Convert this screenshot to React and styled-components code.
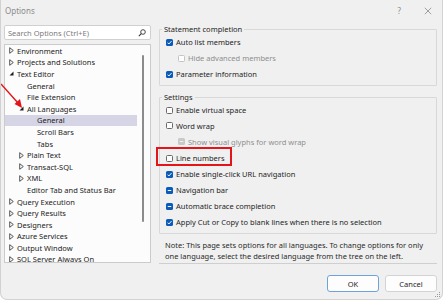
import React from 'react';
import styled, { createGlobalStyle, css } from 'styled-components';

const GlobalStyle = createGlobalStyle`
  html, body {
    margin: 0;
    padding: 0;
    background: #ffffff;
  }
  body {
    font-family: "Noto Sans", "Open Sans", sans-serif;
    font-size: 7.5px;
    color: #1e1e1e;
  }
`;

const treeItems = [
  { label: 'Environment', level: 0, toggle: 'closed' },
  { label: 'Projects and Solutions', level: 0, toggle: 'closed' },
  { label: 'Text Editor', level: 0, toggle: 'open' },
  { label: 'General', level: 1 },
  { label: 'File Extension', level: 1 },
  { label: 'All Languages', level: 1, toggle: 'open' },
  { label: 'General', level: 2, selected: true },
  { label: 'Scroll Bars', level: 2 },
  { label: 'Tabs', level: 2 },
  { label: 'Plain Text', level: 1, toggle: 'closed' },
  { label: 'Transact-SQL', level: 1, toggle: 'closed' },
  { label: 'XML', level: 1, toggle: 'closed' },
  { label: 'Editor Tab and Status Bar', level: 1 },
  { label: 'Query Execution', level: 0, toggle: 'closed' },
  { label: 'Query Results', level: 0, toggle: 'closed' },
  { label: 'Designers', level: 0, toggle: 'closed' },
  { label: 'Azure Services', level: 0, toggle: 'closed' },
  { label: 'Output Window', level: 0, toggle: 'closed' },
  { label: 'SQL Server Always On', level: 0, toggle: 'closed' },
];

const statementOptions = [
  { label: 'Auto list members', state: 'checked' },
  { label: 'Hide advanced members', state: 'unchecked', sub: true, disabled: true },
  { label: 'Parameter information', state: 'checked' },
];

const settingsOptions = [
  { label: 'Enable virtual space', state: 'unchecked' },
  { label: 'Word wrap', state: 'unchecked', height: 15 },
  { label: 'Show visual glyphs for word wrap', state: 'mixed', sub: true, disabled: true, height: 17 },
  { label: 'Line numbers', state: 'unchecked', marked: true },
  { label: 'Enable single-click URL navigation', state: 'checked' },
  { label: 'Navigation bar', state: 'mixed' },
  { label: 'Automatic brace completion', state: 'mixed' },
  { label: 'Apply Cut or Copy to blank lines when there is no selection', state: 'checked' },
];

function Toggle({ kind }) {
  if (kind === 'open') {
    return (
      <svg width="5" height="5" viewBox="0 0 5 5">
        <polygon points="4.5,0.5 4.5,4.5 0.5,4.5" fill="#1e1e1e" />
      </svg>
    );
  }
  return (
    <svg width="5" height="7" viewBox="0 0 5 7">
      <polygon points="0.7,0.7 4.3,3.5 0.7,6.3" fill="none" stroke="#444" strokeWidth="0.9" />
    </svg>
  );
}

function CheckBox({ state, disabled }) {
  return (
    <Box $state={state} $disabled={disabled}>
      {state === 'checked' && (
        <svg width="7" height="7" viewBox="0 0 8 8">
          <polyline points="1.8,4.2 3.3,5.7 6.3,2.4" fill="none" stroke="#fff" strokeWidth="1.1" />
        </svg>
      )}
      {state === 'mixed' && (
        <svg width="7" height="7" viewBox="0 0 8 8">
          <line x1="2" y1="4" x2="6" y2="4" stroke={disabled ? '#f2f2f2' : '#fff'} strokeWidth="1.1" />
        </svg>
      )}
    </Box>
  );
}

function Option({ label, state, sub, disabled, marked, height }) {
  return (
    <OptionRow $sub={sub} $disabled={disabled} $height={height}>
      <OptionInner $marked={marked}>
        <CheckBox state={state} disabled={disabled} />
        <span>{label}</span>
      </OptionInner>
    </OptionRow>
  );
}

export default function App() {
  return (
    <>
      <GlobalStyle />
      <Dialog>
        <TitleBar>
          <Title>Options</Title>
          <TitleButtons>
            <HelpGlyph>?</HelpGlyph>
            <svg width="8" height="8" viewBox="0 0 8 8">
              <path d="M0.8 0.8 L7.2 7.2 M7.2 0.8 L0.8 7.2" stroke="#8a8a8a" strokeWidth="0.8" />
            </svg>
          </TitleButtons>
        </TitleBar>

        <Content>
          <LeftColumn>
            <SearchBox>
              <Placeholder>Search Options (Ctrl+E)</Placeholder>
              <svg width="8" height="8" viewBox="0 0 8 8">
                <circle cx="5" cy="3" r="2.3" fill="none" stroke="#333" strokeWidth="0.9" />
                <line x1="3.3" y1="4.7" x2="0.8" y2="7.2" stroke="#333" strokeWidth="1.1" />
              </svg>
            </SearchBox>
            <Tree>
              <TreeList>
                {treeItems.map((item, i) => (
                  <TreeRow key={i} $level={item.level} $selected={item.selected}>
                    <ToggleSlot>{item.toggle && <Toggle kind={item.toggle} />}</ToggleSlot>
                    {item.label}
                  </TreeRow>
                ))}
              </TreeList>
              <ScrollTrack>
                <ScrollThumb />
              </ScrollTrack>
            </Tree>
          </LeftColumn>

          <RightColumn>
            <GroupBox>
              <Legend>Statement completion</Legend>
              {statementOptions.map((o) => (
                <Option key={o.label} {...o} />
              ))}
            </GroupBox>
            <GroupBox $gap={6}>
              <Legend>Settings</Legend>
              {settingsOptions.map((o) => (
                <Option key={o.label} {...o} />
              ))}
            </GroupBox>
            <Note>
              Note: This page sets options for all languages. To change options for only
              one language, select the desired language from the tree on the left.
            </Note>
          </RightColumn>
        </Content>

        <Footer>
          <Button $primary>OK</Button>
          <Button>Cancel</Button>
        </Footer>

        <Grip width="5" height="5" viewBox="0 0 5 5">
          <rect x="4" y="0" width="1" height="1" fill="#9a9a9a" />
          <rect x="2" y="2" width="1" height="1" fill="#9a9a9a" />
          <rect x="4" y="2" width="1" height="1" fill="#9a9a9a" />
          <rect x="0" y="4" width="1" height="1" fill="#9a9a9a" />
          <rect x="2" y="4" width="1" height="1" fill="#9a9a9a" />
          <rect x="4" y="4" width="1" height="1" fill="#9a9a9a" />
        </Grip>

        <Arrow width="26" height="30" viewBox="0 0 26 30">
          <line x1="0" y1="4" x2="17" y2="23" stroke="#e4141b" strokeWidth="1.4" />
          <polygon points="21,28 13.5,24 19,19" fill="#e4141b" />
        </Arrow>
      </Dialog>
    </>
  );
}

const Dialog = styled.div`
  position: relative;
  box-sizing: border-box;
  width: 443px;
  height: 300px;
  background: #f0f0f0;
  border: 1px solid #d2d2d2;
  border-top: none;
  border-radius: 0 0 7px 7px;
  display: flex;
  flex-direction: column;
  overflow: hidden;
`;

const TitleBar = styled.div`
  height: 21px;
  display: flex;
  align-items: center;
  justify-content: space-between;
  padding: 0 10px 0 4px;
`;

const Title = styled.span`
  color: #8c8c8c;
  font-size: 8px;
`;

const TitleButtons = styled.div`
  display: flex;
  align-items: center;
  gap: 23px;
`;

const HelpGlyph = styled.span`
  color: #8c8c8c;
  font-size: 8px;
`;

const Content = styled.div`
  display: flex;
  gap: 8px;
  padding: 0 5px 0 3px;
`;

const LeftColumn = styled.div`
  width: 147px;
  display: flex;
  flex-direction: column;
  gap: 4px;
  padding-top: 4px;
`;

const SearchBox = styled.div`
  box-sizing: border-box;
  height: 15px;
  background: #ffffff;
  border: 1px solid #d0d0d0;
  border-radius: 2px;
  display: flex;
  align-items: center;
  justify-content: space-between;
  padding: 0 4px 0 3px;
`;

const Placeholder = styled.span`
  color: #7a7a7a;
`;

const Tree = styled.div`
  box-sizing: border-box;
  height: 219px;
  background: #fcfcfc;
  border: 1px solid #cbcbcb;
  display: flex;
  overflow: hidden;
`;

const TreeList = styled.div`
  width: 132px;
  display: flex;
  flex-direction: column;
`;

const TreeRow = styled.div`
  flex: none;
  height: 11.6px;
  display: flex;
  align-items: center;
  white-space: nowrap;
  color: #222;
  padding-left: ${(p) => 4 + p.$level * 10}px;
  ${(p) =>
    p.$selected &&
    css`
      background: #d5d5e5;
    `}
`;

const ToggleSlot = styled.span`
  width: 8px;
  flex: none;
  display: flex;
  align-items: center;
`;

const ScrollTrack = styled.div`
  flex: 1;
  padding: 10px 0 0 5px;
`;

const ScrollThumb = styled.div`
  width: 2px;
  height: 167px;
  background: #8c8c8c;
  border-radius: 1px;
`;

const RightColumn = styled.div`
  flex: 1;
  display: flex;
  flex-direction: column;
  padding-top: 3px;
`;

const GroupBox = styled.fieldset`
  margin: ${(p) => p.$gap || 0}px 0 0 0;
  padding: 0 0 3px 0;
  border: 1px solid #d8d8d8;
  border-radius: 1px;
  min-width: 0;
`;

const Legend = styled.legend`
  padding: 0 2px;
  margin-left: 2px;
  line-height: 10px;
  color: #1e1e1e;
`;

const OptionRow = styled.div`
  height: ${(p) => p.$height || 16}px;
  display: flex;
  align-items: center;
  padding-left: ${(p) => (p.$sub ? 18 : 6)}px;
  color: ${(p) => (p.$disabled ? '#8f8f8f' : '#1e1e1e')};
  white-space: nowrap;
`;

const OptionInner = styled.span`
  position: relative;
  display: flex;
  align-items: center;
  gap: 3px;
  ${(p) =>
    p.$marked &&
    css`
      &::after {
        content: '';
        position: absolute;
        box-sizing: border-box;
        left: -10px;
        top: -6px;
        width: 76px;
        height: 19px;
        border: 2px solid #e4141b;
      }
    `}
`;

const Box = styled.span`
  box-sizing: border-box;
  width: 7px;
  height: 7px;
  border-radius: 1.5px;
  flex: none;
  display: flex;
  align-items: center;
  justify-content: center;
  ${(p) => {
    if (p.$state === 'unchecked') {
      return css`
        background: #fdfdfd;
        border: 1px solid ${p.$disabled ? '#c4c4c4' : '#6a6a6a'};
      `;
    }
    return css`
      background: ${p.$disabled ? '#c9c9c9' : '#0b5cb8'};
    `;
  }}
`;

const Note = styled.div`
  margin-top: 6px;
  padding: 0 0 2px 6px;
  line-height: 10.7px;
  color: #2a2a2a;
  border-bottom: 1px solid #cfcfcf;
`;

const Footer = styled.div`
  display: flex;
  justify-content: flex-end;
  gap: 6px;
  padding: 11px 5px 0 0;
`;

const Button = styled.div`
  box-sizing: border-box;
  width: 52px;
  height: 17px;
  display: flex;
  align-items: center;
  justify-content: center;
  background: #fdfdfd;
  border-radius: 3px;
  border: 1px solid ${(p) => (p.$primary ? '#6fa3d8' : '#d3d3d3')};
  color: #1e1e1e;
`;

const Grip = styled.svg`
  position: absolute;
  right: 2px;
  bottom: 2px;
`;

const Arrow = styled.svg`
  position: absolute;
  left: 0;
  top: 80px;
`;
